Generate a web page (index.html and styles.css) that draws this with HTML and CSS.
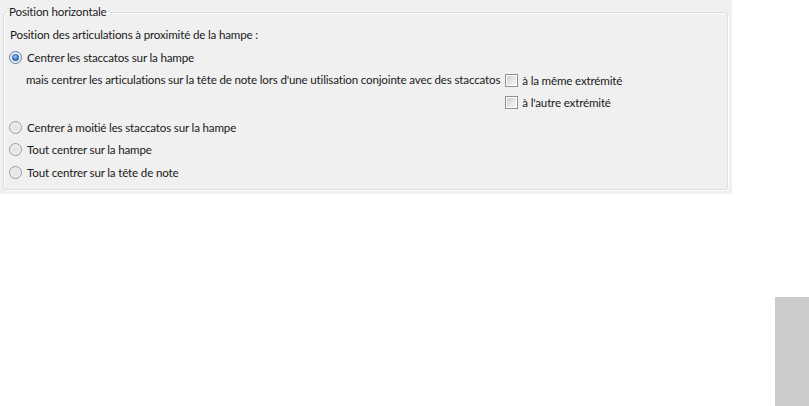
FILE: index.html
```html
<!DOCTYPE html>
<html>
<head>
    <title>Position horizontale</title>
    <link rel="stylesheet" href="styles.css">
</head>
<body>
    <div class="page">
        <div class="panel">
            <fieldset class="group">
                <legend>Position horizontale</legend>
                <div class="row caption">Position des articulations à proximité de la hampe :</div>

                <label class="row option tall">
                    <span class="radio checked"></span>
                    <span>Centrer les staccatos sur la hampe</span>
                </label>

                <div class="sub">
                    <div class="sub-text">mais centrer les articulations sur la tête de note lors d'une utilisation conjointe avec des staccatos</div>
                    <div class="checks">
                        <label class="check-row">
                            <span class="check"></span>
                            <span>à la même extrémité</span>
                        </label>
                        <label class="check-row second">
                            <span class="check"></span>
                            <span>à l'autre extrémité</span>
                        </label>
                    </div>
                </div>

                <label class="row option spaced">
                    <span class="radio"></span>
                    <span>Centrer à moitié les staccatos sur la hampe</span>
                </label>
                <label class="row option">
                    <span class="radio"></span>
                    <span>Tout centrer sur la hampe</span>
                </label>
                <label class="row option tall">
                    <span class="radio"></span>
                    <span>Tout centrer sur la tête de note</span>
                </label>
            </fieldset>
        </div>
        <div class="side-block"></div>
    </div>
</body>
</html>
```

FILE: styles.css
```css
body { margin: 0; background: #fff; font-family: Lato, "Noto Sans", sans-serif; font-size: 11.6px; letter-spacing: -0.17px; color: #1a1a1a; }
.page { height: 406px; display: flex; flex-direction: column; }
.panel { width: 732px; height: 194px; box-sizing: border-box; background: #f0f0f0; padding: 4px 4px 0 3px; }
.group { margin: 0; padding: 3px 0 5px 5px; border: 1px solid #d5dfe5; border-radius: 3px; box-shadow: inset 1px 1px 0 #fff, 1px 1px 0 #fff; }
.group legend { margin-left: -2px; padding: 0 2px; line-height: 16px; }
.row { height: 22px; display: flex; align-items: center; }
.row.tall { height: 24px; }
.caption { padding-left: 1px; }
.option .radio { margin-right: 5px; }
.spaced { margin-top: 2px; }
.sub { display: flex; padding-left: 17px; }
.sub-text { height: 22px; line-height: 22px; margin-right: 5px; }
.checks { display: flex; flex-direction: column; }
.check-row { height: 22px; display: flex; align-items: center; }
.check-row.second { height: 23px; }
.check-row .check { margin-right: 4px; }

.radio { width: 13px; height: 13px; box-sizing: border-box; border-radius: 50%; border: 1px solid #9a9a9a; background: radial-gradient(circle at 50% 50%, #e4e4e4 0, #e9e9e9 45%, #f6f6f6 100%); display: inline-block; position: relative; }
.radio.checked { border-color: #5c7fa8; }
.radio.checked::after { content: ""; position: absolute; left: 2px; top: 2px; width: 7px; height: 7px; border-radius: 50%; background: radial-gradient(circle at 45% 40%, #9fd0ff 0, #3b7bc8 45%, #1c3f78 100%); }

.check { width: 13px; height: 13px; box-sizing: border-box; border: 1px solid #8f8f8f; background: #fff; display: inline-block; position: relative; }
.check::after { content: ""; position: absolute; left: 1px; top: 1px; right: 1px; bottom: 1px; background: linear-gradient(135deg, #cfcfcf 0, #e8e8e8 60%, #f4f4f4 100%); }

.side-block { margin-top: auto; align-self: flex-end; width: 34px; height: 109px; background: #cccccc; }
```
